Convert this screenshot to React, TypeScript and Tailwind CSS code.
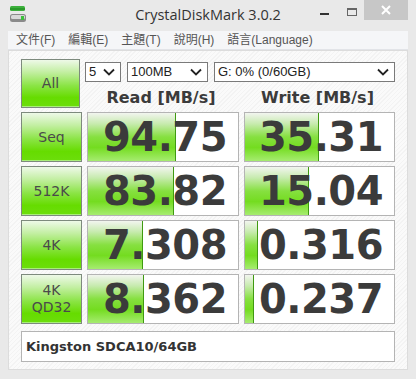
import React from "react";

const rows = [
  { label: ["Seq"], read: "94.75", readBar: 88, write: "35.31", writeBar: 74 },
  { label: ["512K"], read: "83.82", readBar: 86, write: "15.04", writeBar: 64 },
  { label: ["4K"], read: "7.308", readBar: 55, write: "0.316", writeBar: 13 },
  { label: ["4K", "QD32"], read: "8.362", readBar: 56, write: "0.237", writeBar: 9 },
];

const ui = "font-['Liberation_Sans',Arial,sans-serif]";
const bold = "font-['DejaVu_Sans',Verdana,sans-serif] font-bold";

function Chevron() {
  return (
    <svg width="12" height="8" viewBox="0 0 12 8" className="shrink-0">
      <path d="M1 1.5 L6 6.5 L11 1.5" fill="none" stroke="#222" strokeWidth="1.8" />
    </svg>
  );
}

function Select({ text, className }: { text: string; className: string }) {
  return (
    <div className={`flex h-[20px] items-center justify-between border border-[#7a7a7a] bg-white pl-[3px] pr-[5px] text-[13px] text-[#222] ${ui} ${className}`}>
      <span>{text}</span>
      <Chevron />
    </div>
  );
}

function GreenButton({ lines }: { lines: string[] }) {
  return (
    <div className="flex h-full w-[61px] flex-col items-center justify-center border border-[#7d8a7d] bg-[linear-gradient(to_bottom,#eef9e8_0%,#c4efa4_25%,#8ae444_55%,#66dc00_80%,#6cde0c_100%)] shadow-[inset_0_-1px_0_#a8ee78]">
      {lines.map((l) => (
        <span key={l} className="font-['DejaVu_Sans',sans-serif] text-[14px] leading-[17px] text-[#4a4a4a]">
          {l}
        </span>
      ))}
    </div>
  );
}

function ResultBox({ value, bar, width }: { value: string; bar: number; width: string }) {
  return (
    <div className={`relative flex h-full ${width} items-center justify-end border border-[#b4b4b4] bg-white pr-[11px]`}>
      <div
        className="absolute bottom-0 left-0 top-0 border-r border-[#3f9a10] bg-[linear-gradient(to_bottom,#f2f5ef_0%,#c8ebb0_22%,#86e040_50%,#74dc20_72%,#a6ec70_100%)]"
        style={{ width: bar }}
      />
      <span className={`relative text-[40px] leading-none tracking-[-0.5px] text-[#3b3b3b] ${bold}`}>{value}</span>
    </div>
  );
}

export default function App() {
  return (
    <div className="flex h-[379px] w-[416px] flex-col bg-[#e9e9e9]">
      {/* title bar */}
      <div className="relative flex h-[31px] items-center">
        <svg width="18" height="18" viewBox="0 0 18 18" className="absolute left-[9px] top-[5px]">
          <rect x="1" y="1" width="15" height="5" rx="1.5" fill="#3cb03c" />
          <rect x="1" y="3" width="15" height="2" fill="#2a9a2a" />
          <rect x="1" y="9" width="16" height="8" rx="2.5" fill="#8a8a8a" />
          <rect x="2" y="10" width="14" height="4" rx="1.5" fill="#d8d8d8" />
          <rect x="12" y="11" width="3" height="4" fill="#3cc03c" />
        </svg>
        <div className="w-full pb-[2px] text-center font-['Open_Sans',sans-serif] text-[14.5px] text-[#333]">CrystalDiskMark 3.0.2</div>
        <div className="absolute left-[320px] top-[13px] h-[2px] w-[9px] bg-[#333]" />
        <div className="absolute left-[347px] top-[8px] h-[8px] w-[10px] border border-t-2 border-[#666]" />
        <div className="absolute left-[364px] top-0 flex h-[20px] w-[44px] items-center justify-center bg-[#c7c7c7]">
          <svg width="10" height="10" viewBox="0 0 10 10">
            <path d="M1 1 L9 9 M9 1 L1 9" stroke="#fff" strokeWidth="2" />
          </svg>
        </div>
      </div>

      {/* menu bar */}
      <div className="mx-[8px] flex h-[19px] items-center gap-[13px] border-b border-[#e2e4e8] bg-[#f5f6f8] pl-[8px] font-['Liberation_Sans','Noto_Sans_CJK_TC',sans-serif] text-[12px] text-[#555]">
        <span>文件(F)</span>
        <span>編輯(E)</span>
        <span>主題(T)</span>
        <span>說明(H)</span>
        <span>語言(Language)</span>
      </div>

      {/* main panel */}
      <div className="mx-[8px] flex flex-1 flex-col gap-[4px] border border-[#dcdcdc] bg-[repeating-linear-gradient(135deg,#fafafa_0px,#fafafa_2px,#f3f3f3_2px,#f3f3f3_3px)] px-[12px] pb-[5px] pt-[8px]">
        <div className="flex h-[49px] gap-[5px]">
          <GreenButton lines={["All"]} />
          <div className="flex flex-col">
            <div className="mt-[3px] flex gap-[6px]">
              <Select text="5" className="w-[36px]" />
              <Select text="100MB" className="w-[81px]" />
              <Select text="G: 0% (0/60GB)" className="w-[181px]" />
            </div>
            <div className={`mt-[7px] flex text-[16px] leading-[18px] text-[#3b3b3b] ${bold}`}>
              <div className="w-[152px] text-center">Read [MB/s]</div>
              <div className="ml-[5px] w-[151px] text-center">Write [MB/s]</div>
            </div>
          </div>
        </div>

        {rows.map((r) => (
          <div key={r.read} className="flex h-[50px] gap-[5px]">
            <GreenButton lines={r.label} />
            <ResultBox value={r.read} bar={r.readBar} width="w-[152px]" />
            <ResultBox value={r.write} bar={r.writeBar} width="w-[151px]" />
          </div>
        ))}

        <div className={`mt-[3px] flex h-[31px] items-center border border-[#b4b4b4] bg-white pl-[4px] text-[13px] text-[#333] ${bold}`}>
          Kingston SDCA10/64GB
        </div>
      </div>
      <div className="h-[9px]" />
    </div>
  );
}
